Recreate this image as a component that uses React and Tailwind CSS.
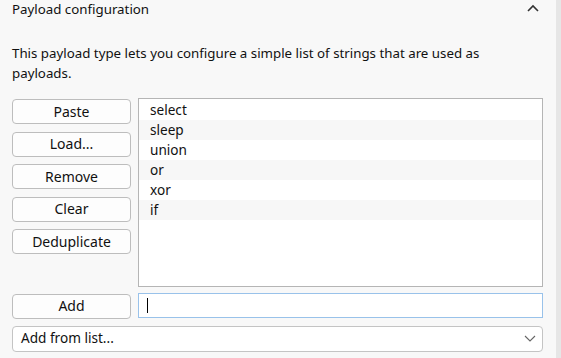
import React from 'react';

const FONT = { fontFamily: '"Noto Sans", "Open Sans", Arial, sans-serif' };

const ITEMS = ['select', 'sleep', 'union', 'or', 'xor', 'if'];
const ACTIONS = ['Paste', 'Load...', 'Remove', 'Clear', 'Deduplicate'];

const Btn = ({ children }) => (
  <button className="h-[25px] w-full rounded-[4px] border border-[#bdbdbd] bg-[#fdfdfd] text-[14px] leading-none text-[#111]">
    {children}
  </button>
);

export default function App() {
  return (
    <div className="flex h-[358px] w-[561px] bg-[#f8f8f8] text-[#111]" style={FONT}>
      <div className="flex-1 pl-3 pr-[13px]">
        {/* section header */}
        <div className="flex h-[20px] items-center justify-between">
          <span className="text-[13.3px]">Payload configuration</span>
          <svg width="12" height="8" viewBox="0 0 12 8" className="mb-[4px] mr-[4px]">
            <path d="M1 7 L6 2 L11 7" fill="none" stroke="#333" strokeWidth="1.6" />
          </svg>
        </div>

        <p className="mt-[23px] max-w-[500px] text-[13.3px] leading-[20px]">
          This payload type lets you configure a simple list of strings that are used as payloads.
        </p>

        <div className="mt-[15px] flex gap-[7px]">
          <div className="flex w-[119px] flex-col gap-[7.5px] pt-[1px]">
            {ACTIONS.map(a => <Btn key={a}>{a}</Btn>)}
          </div>
          <div className="h-[189px] flex-1 border border-[#b5b5b5] bg-white pt-[1px]">
            {ITEMS.map((it, i) => (
              <div key={it} className={`h-[20px] pl-[11px] text-[13.6px] leading-[20px] ${i % 2 ? 'bg-[#f7f7f7]' : 'bg-white'}`}>
                {it}
              </div>
            ))}
          </div>
        </div>

        <div className="mt-[6px] flex gap-[7px]">
          <div className="w-[119px]"><Btn>Add</Btn></div>
          <div className="flex h-[25px] flex-1 items-center border border-[#99c2ea] bg-white pl-[8px]">
            <div className="h-[15px] w-px bg-black" />
          </div>
        </div>

        <div className="mt-[7px] flex h-[26px] items-center justify-between rounded-[4px] border border-[#c4c4c4] bg-white pl-[8px] pr-[6px]">
          <span className="text-[13.6px]">Add from list...</span>
          <svg width="12" height="7" viewBox="0 0 12 7">
            <path d="M1 1 L6 6 L11 1" fill="none" stroke="#666" strokeWidth="1.1" />
          </svg>
        </div>
      </div>
      <div className="w-[5px] bg-[#e6e6e6]" />
    </div>
  );
}
